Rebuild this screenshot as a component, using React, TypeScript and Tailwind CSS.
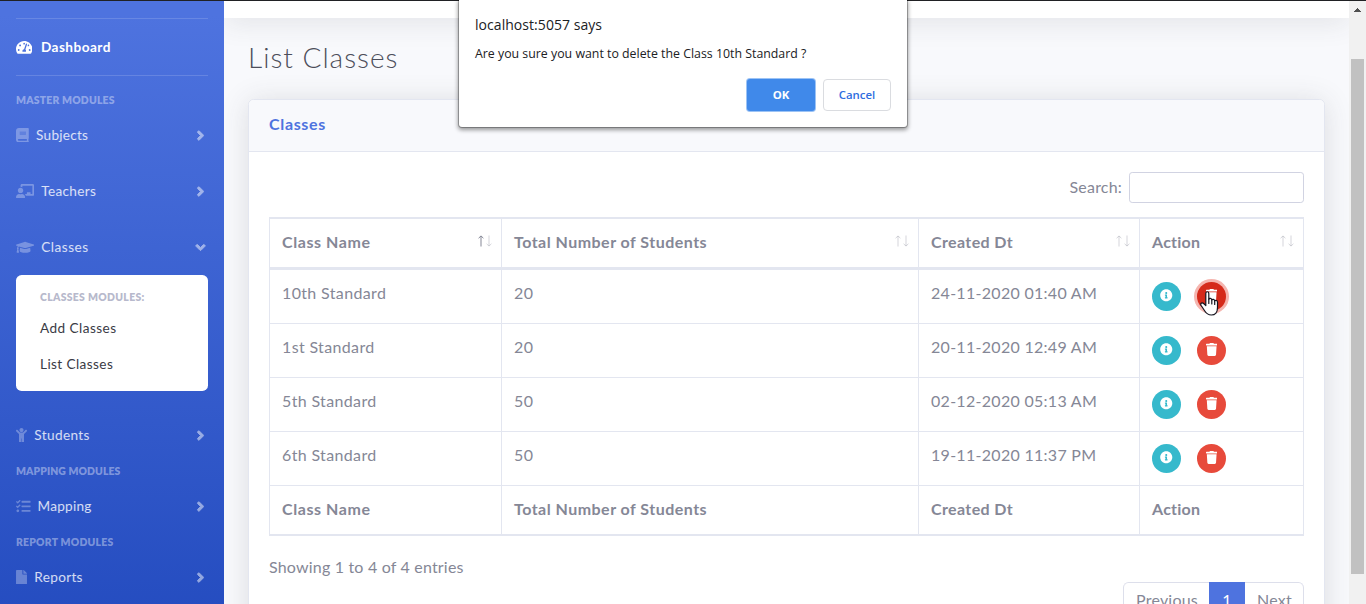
import type { ReactNode } from "react";
import type { IconType } from "react-icons";
import {
  FaAngleDown,
  FaAngleRight,
  FaBook,
  FaChalkboardTeacher,
  FaChild,
  FaFile,
  FaGraduationCap,
  FaInfoCircle,
  FaTachometerAlt,
  FaTasks,
  FaTrash,
} from "react-icons/fa";

function NavItem({
  icon: Icon,
  iconClass,
  label,
  labelClass,
  open = false,
}: {
  icon: IconType;
  iconClass: string;
  label: string;
  labelClass: string;
  open?: boolean;
}) {
  return (
    <a className="flex h-14 shrink-0 items-center px-4 text-[13.6px] text-white/80">
      <Icon className={`h-[14.6px] shrink-0 text-white/30 ${iconClass}`} />
      <span className={`grow whitespace-nowrap ${labelClass}`}>{label}</span>
      {open ? (
        <FaAngleDown className="mr-[0.5px] h-[15px] w-[15px] stroke-current stroke-[32px] text-white opacity-50" />
      ) : (
        <FaAngleRight className="mr-[0.5px] h-[15px] w-[15px] stroke-current stroke-[32px] text-white opacity-50" />
      )}
    </a>
  );
}

function NavHeading({ children, className }: { children: ReactNode; className: string }) {
  return (
    <div
      className={`h-[15px] shrink-0 px-4 text-[10.4px] leading-[16px] font-extrabold whitespace-nowrap text-white/40 ${className}`}
    >
      {children}
    </div>
  );
}

function Sidebar() {
  return (
    <nav className="flex h-[604px] w-56 shrink-0 flex-col overflow-hidden bg-[linear-gradient(180deg,#4e73df_15px,#224abe_655px)]">
      <div className="mx-4 mt-[18px] h-px shrink-0 bg-white/15" />
      <a className="flex h-14 shrink-0 items-center px-4 text-[13.6px] font-bold text-white">
        <FaTachometerAlt className="h-[14.6px] w-[16.4px]" />
        <span className="ml-[8.5px] tracking-[0.47px]">Dashboard</span>
      </a>
      <div className="mx-4 mb-4 h-px shrink-0 bg-white/15" />
      <NavHeading className="tracking-[0.2px]">MASTER MODULES</NavHeading>
      <NavItem icon={FaBook} iconClass="w-[12.8px]" label="Subjects" labelClass="ml-[7.3px] tracking-[0.25px]" />
      <NavItem icon={FaChalkboardTeacher} iconClass="w-[18.2px]" label="Teachers" labelClass="ml-[7px] tracking-[0.33px]" />
      <NavItem icon={FaGraduationCap} iconClass="w-[18.2px]" label="Classes" labelClass="ml-[7px] tracking-[0.52px]" open />
      <div className="mx-4 mb-4 flex h-[116px] shrink-0 flex-col rounded-[5.6px] bg-white px-6 pt-2 whitespace-nowrap">
        <div className="h-[27px] text-[10.4px] leading-[28px] font-extrabold tracking-[0.33px] text-[#b7b9cc]">
          CLASSES MODULES:
        </div>
        <a className="h-9 text-[13.6px] leading-9 tracking-[0.44px] text-[#3a3b45]">Add Classes</a>
        <a className="h-9 text-[13.6px] leading-9 tracking-[0.4px] text-[#3a3b45]">List Classes</a>
      </div>
      <NavItem icon={FaChild} iconClass="w-[11px]" label="Students" labelClass="ml-[7.3px] tracking-[0.37px]" />
      <NavHeading className="tracking-[0.08px]">MAPPING MODULES</NavHeading>
      <NavItem icon={FaTasks} iconClass="w-[14.6px]" label="Mapping" labelClass="ml-[7px] tracking-[0.24px]" />
      <NavHeading className="tracking-[0.23px]">REPORT MODULES</NavHeading>
      <NavItem icon={FaFile} iconClass="w-[11px]" label="Reports" labelClass="ml-[7.3px] tracking-[0.32px]" />
    </nav>
  );
}

function SortArrows({ ascending = false }: { ascending?: boolean }) {
  return (
    <svg viewBox="0 0 14 12" className="mt-[15.5px] mr-[9px] h-3 w-[14px] shrink-0" fill="none" stroke="#858796">
      <path d="M3 11.5V1.2M0.6 3.2L3 0.9L5.4 3.2" strokeOpacity={ascending ? 1 : 0.35} />
      <path d="M11 0.5V10.8M8.6 8.8L11 11.1L13.4 8.8" strokeOpacity={0.35} />
    </svg>
  );
}

const GRID = "grid grid-cols-[232px_417px_221px_164px]";
const CELL = "border-r border-[#e3e6f0] pt-[11px] pl-3 whitespace-nowrap";

const columns = [
  { name: "Class Name", tracking: "tracking-[0.57px]" },
  { name: "Total Number of Students", tracking: "tracking-[0.48px]" },
  { name: "Created Dt", tracking: "tracking-[0.38px]" },
  { name: "Action", tracking: "tracking-[0.25px]" },
];

const rows = [
  { name: "10th Standard", total: "20", created: "24-11-2020 01:40 AM", active: true },
  { name: "1st Standard", total: "20", created: "20-11-2020 12:49 AM", active: false },
  { name: "5th Standard", total: "50", created: "02-12-2020 05:13 AM", active: false },
  { name: "6th Standard", total: "50", created: "19-11-2020 11:37 PM", active: false },
];

function ClassTable() {
  return (
    <div className="border-t-2 border-l border-[#e3e6f0]">
      <div className={`${GRID} h-[51px] border-b-[3px] border-[#e3e6f0] font-bold`}>
        {columns.map((c, i) => (
          <div key={c.name} className="flex justify-between border-r border-[#e3e6f0] pl-3 whitespace-nowrap">
            <span className={`pt-[11px] ${c.tracking}`}>{c.name}</span>
            <SortArrows ascending={i === 0} />
          </div>
        ))}
      </div>
      {rows.map((r) => (
        <div key={r.name} className={`${GRID} h-[54px] border-b border-[#e3e6f0]`}>
          <div className={`${CELL} tracking-[0.35px]`}>{r.name}</div>
          <div className={`${CELL} tracking-[0.35px]`}>{r.total}</div>
          <div className={`${CELL} tracking-[0.29px]`}>{r.created}</div>
          <div className="flex gap-4 border-r border-[#e3e6f0] pt-3 pl-3">
            <button className="flex h-[29px] w-[29px] items-center justify-center rounded-full bg-[#36b9cc] pb-[2px]">
              <FaInfoCircle className="h-[12.5px] w-[12.5px] text-white" />
            </button>
            <button
              className={
                r.active
                  ? "flex h-[29px] w-[29px] items-center justify-center rounded-full bg-[#d52a1a] pb-[2px] ring-3 ring-[#f5b5af]"
                  : "flex h-[29px] w-[29px] items-center justify-center rounded-full bg-[#e74a3b] pb-[2px]"
              }
            >
              <FaTrash className="h-[13px] w-[11.4px] text-white" />
            </button>
          </div>
        </div>
      ))}
      <div className={`${GRID} h-[50px] border-b-2 border-[#e3e6f0] font-bold`}>
        {columns.map((c) => (
          <div key={c.name} className={`${CELL} ${c.tracking}`}>
            {c.name}
          </div>
        ))}
      </div>
    </div>
  );
}

function ConfirmDialog() {
  return (
    <div className="absolute top-0 left-[459px] flex h-[127px] w-[448px] flex-col rounded-b-[3px] bg-white px-4 pt-[15px] font-['Open_Sans',sans-serif] text-[#202124] shadow-[0_0_0_1px_rgba(0,0,0,0.25),0_2px_4px_1px_rgba(0,0,0,0.4)]">
      <div className="text-[14px] leading-5 tracking-[0.05px]">localhost:5057 says</div>
      <div className="mt-[9px] text-[12.35px] leading-5 whitespace-nowrap">
        Are you sure you want to delete the Class 10th Standard ?
      </div>
      <div className="mt-[15px] flex justify-end gap-2 text-[11.4px] font-semibold">
        <button className="h-8 w-[68px] rounded-[3px] bg-[#4089ea] font-bold text-white shadow-[0_0_0_1px_#9cc3f5]">OK</button>
        <button className="h-8 w-[68px] rounded-[4px] border border-[#dadce0] text-[#2f6de0]">Cancel</button>
      </div>
    </div>
  );
}

function HandCursor() {
  return (
    <svg
      viewBox="0 0 19 25"
      className="absolute top-[290.5px] left-[1200px] h-[25px] w-[19px]"
      fill="#fff"
      stroke="#15151f"
      strokeWidth="1.2"
      strokeLinejoin="round"
      strokeLinecap="round"
    >
      <path d="M5.8 14.5V2.4C5.8 0.2 8.8 0.2 8.8 2.4V8.2C9.4 7 11.6 7.2 11.8 8.9C12.5 7.9 14.5 8.2 14.7 9.8C15.6 9 17.5 9.4 17.5 11.2V16.5C17.5 21.3 15.3 24 11.3 24C7.4 24 6.2 22.4 4.6 19.8L1 14.2C-0.1 12.2 2.2 11.2 3.6 12.5Z" />
      <path d="M8.8 8.2V12.5M11.8 8.9V13M14.7 9.8V13.5" fill="none" />
    </svg>
  );
}

function Scrollbar() {
  return (
    <div className="flex h-[604px] w-[17px] shrink-0 flex-col items-center bg-[#f1f1f1]">
      <svg viewBox="0 0 7 4" className="mt-2 h-1 w-[7px] shrink-0" fill="#505050" shapeRendering="crispEdges">
        <path d="M3 0H4V1H5V2H6V3H7V4H0V3H1V2H2V1H3Z" />
      </svg>
      <div className="mt-[47px] h-[515px] w-[13px] shrink-0 bg-[#c1c1c1]" />
    </div>
  );
}

export default function App() {
  return (
    <div className="relative h-[604px] w-[1366px] overflow-hidden bg-[#f8f9fc] font-['Lato',sans-serif] text-base leading-6 text-[#858796]">
      <div className="flex h-[604px]">
        <Sidebar />
        <main className="flex h-[604px] min-w-0 grow flex-col overflow-hidden">
          <div className="h-[18px] shrink-0 bg-white shadow-[0_2.4px_28px_0_rgba(58,59,69,0.15)]" />
          <div className="flex flex-col px-6">
            <h1 className="mt-[23px] mb-[25px] text-[28px] leading-[33px] font-light tracking-[1px] text-[#4c4e5a]">
              List Classes
            </h1>
            <section className="h-[560px] shrink-0 rounded-[5.6px] border border-[#e3e6f0] bg-white shadow-[0_2.4px_28px_0_rgba(58,59,69,0.15)]">
              <div className="h-[52px] rounded-t-[5px] border-b border-[#e3e6f0] bg-[#f8f9fc] px-5 leading-[48px] font-bold tracking-[0.66px] text-[#4e73df]">
                Classes
              </div>
              <div className="flex flex-col px-5 pt-5">
                <label className="mb-[14px] flex h-[31px] items-center justify-end">
                  <span className="mr-[7px] mb-[2px] tracking-[0.2px]">Search:</span>
                  <input className="h-[31px] w-[175px] rounded-[3.2px] border border-[#d1d3e2] bg-white" />
                </label>
                <ClassTable />
                <div className="mt-[19px] tracking-[0.19px]">Showing 1 to 4 of 4 entries</div>
                <div className="mt-[3px] flex h-[38px] self-end leading-[34px]">
                  <a className="w-[86px] rounded-l-[5.6px] border border-r-0 border-[#dddfeb] pl-3 tracking-[0.22px]">Previous</a>
                  <a className="w-9 border border-[#4e73df] bg-[#4e73df] text-center text-white">1</a>
                  <a className="w-[59px] rounded-r-[5.6px] border border-l-0 border-[#dddfeb] pl-3 tracking-[0.25px]">Next</a>
                </div>
              </div>
            </section>
          </div>
        </main>
        <Scrollbar />
      </div>
      <div className="absolute inset-x-0 top-0 h-px bg-[#202124]" />
      <ConfirmDialog />
      <HandCursor />
    </div>
  );
}
